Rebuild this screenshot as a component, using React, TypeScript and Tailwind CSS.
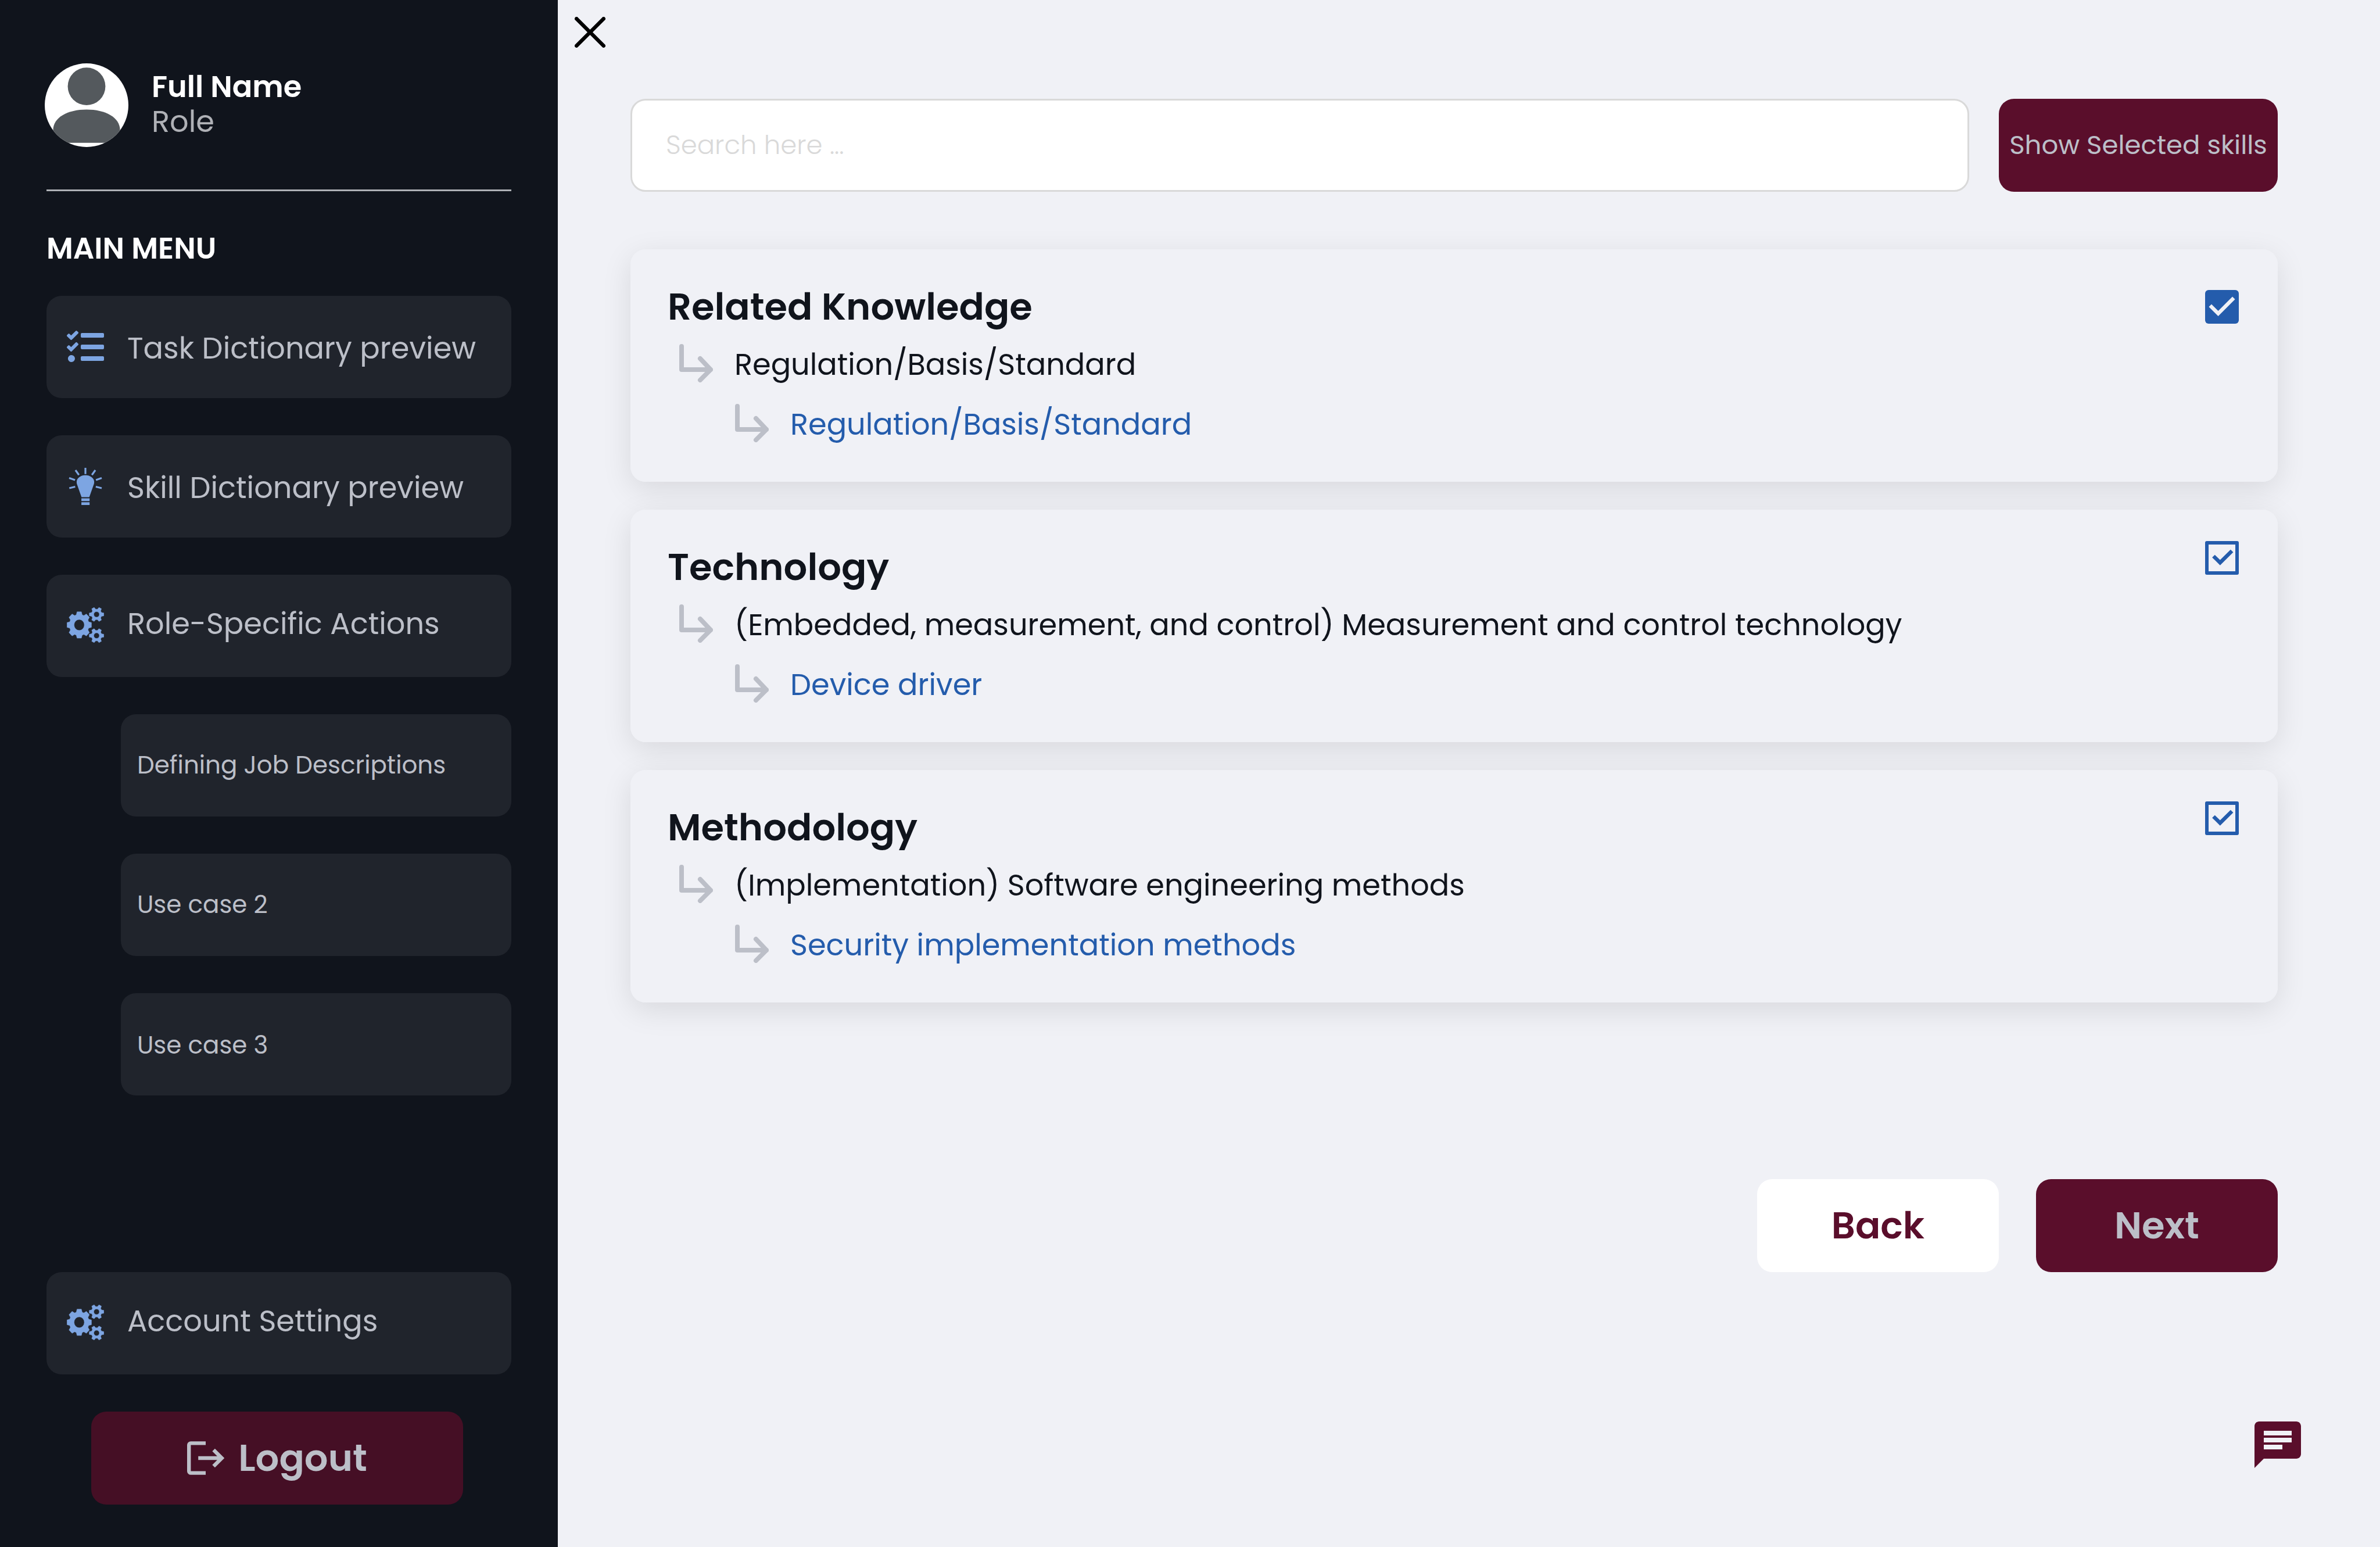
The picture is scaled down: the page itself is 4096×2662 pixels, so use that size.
import { useState } from "react";
import type { ReactNode } from "react";
import { FaTasks } from "react-icons/fa";
import { MdChat } from "react-icons/md";

/** Outline of a toothed wheel; the first tooth points to the right. */
function gearPath(
  cx: number,
  cy: number,
  rx: number,
  ry: number,
  teeth: number,
  body: number,
  tipHalf: number,
  baseHalf: number,
  hole: number,
) {
  const k = ry / rx;
  const points: string[] = [];
  for (let i = 0; i < teeth; i++) {
    const a = (i * 2 * Math.PI) / teeth;
    const corners = [
      [body, -baseHalf],
      [rx, -tipHalf],
      [rx, tipHalf],
      [body, baseHalf],
    ];
    for (const [u, v] of corners) {
      const x = cx + u * Math.cos(a) - v * Math.sin(a);
      const y = cy + (u * Math.sin(a) + v * Math.cos(a)) * k;
      points.push(`${x.toFixed(1)} ${y.toFixed(1)}`);
    }
  }
  const h = hole * k;
  return `M${points.join("L")}ZM${cx - hole} ${cy}a${hole} ${h} 0 1 0 ${hole * 2} 0a${hole} ${h} 0 1 0 ${-hole * 2} 0Z`;
}

const GEARS = [
  gearPath(80, 119, 79, 85, 8, 61, 14, 19, 33),
  gearPath(192, 51, 47, 47, 6, 32, 9, 12, 18),
  gearPath(192, 188, 47, 47, 6, 32, 9, 12, 18),
];

function GearsIcon() {
  return (
    <svg viewBox="0 5 240 240" className="size-16 shrink-0" fill="currentColor" fillRule="evenodd" stroke="currentColor" strokeWidth="2" strokeLinejoin="round" aria-hidden="true">
      {GEARS.map((d) => (
        <path key={d} d={d} />
      ))}
    </svg>
  );
}

function BulbIcon() {
  return (
    <svg viewBox="42 54 240 240" className="size-16 shrink-0" fill="currentColor" aria-hidden="true">
      <path
        d="M162 54V94M98 69L120 100M226 69L204 100M57 120L95 133M267 120L230 133M58 185L96 176M267 185L229 176"
        stroke="currentColor"
        strokeWidth="12"
      />
      <path d="M137 243L107 158C98 125 128 102 162 102S226 125 217 158L187 243Z" />
      <path d="M136 251h53v18h-53zM136 276h53v18h-53z" />
    </svg>
  );
}

function AvatarIcon() {
  return (
    <svg viewBox="0 0 180 180" className="size-36 shrink-0" role="img" aria-label="Profile picture">
      <clipPath id="avatar">
        <circle cx="90" cy="90" r="90" />
      </clipPath>
      <g clipPath="url(#avatar)">
        <path d="M0 0h180v180H0z" fill="#fff" />
        <circle cx="90" cy="49.5" r="40.5" fill="#54595D" />
        <path d="M18 171V144C18 116 50 99.5 90 99.5S162 116 162 144V171Z" fill="#54595D" />
      </g>
    </svg>
  );
}

function CloseIcon() {
  return (
    <svg viewBox="0 0 198 198" className="size-[53px]" stroke="currentColor" strokeWidth="24" strokeLinecap="round" aria-hidden="true">
      <path d="M12 12L186 186M186 12L12 186" />
    </svg>
  );
}

function LogoutIcon() {
  return (
    <svg viewBox="0 0 80 72" className="h-[58px] w-16 shrink-0" fill="none" stroke="currentColor" strokeWidth="8" aria-hidden="true">
      <path d="M40 4H8a4 4 0 0 0-4 4V64a4 4 0 0 0 4 4H40M24 36H74M57 18.5L74.5 36L57 53.5" />
    </svg>
  );
}

function BranchIcon() {
  return (
    <svg viewBox="0 0 58 66" className="mb-1.5 h-[66px] w-[58px] shrink-0 text-[#BCBFC8]" fill="none" stroke="currentColor" strokeWidth="8" strokeLinecap="round" strokeLinejoin="round" aria-hidden="true">
      <path d="M4 4V44H54M36 25L54 44L36 62" />
    </svg>
  );
}

function MenuItem({ icon, label, shift }: { icon: ReactNode; label: string; shift: string }) {
  return (
    <a href="#" className="flex h-44 items-center gap-10 rounded-[26px] bg-[#20242C] pl-[35px] text-[51px] leading-[76px] text-[#BCBFC8]">
      <span className="text-[#7DA5E2]">{icon}</span>
      <span className={shift}>{label}</span>
    </a>
  );
}

function SubItem({ label, shift = "" }: { label: string; shift?: string }) {
  return (
    <a href="#" className="ml-32 flex h-44 items-center rounded-[26px] bg-[#20242C] pl-7 text-[42px] leading-[62px] text-[#BCBFC8]">
      <span className={shift}>{label}</span>
    </a>
  );
}

function Sidebar() {
  return (
    <aside className="flex w-[960px] shrink-0 flex-col bg-[#10141C] px-20 pt-[109px] pb-[73px]">
      <div className="-ml-[3px] flex items-start gap-10">
        <AvatarIcon />
        <div className="pt-[10px] text-[51px] leading-[60px]">
          <p className="font-semibold text-white">Full Name</p>
          <p className="text-[#AFB1B6]">Role</p>
        </div>
      </div>
      <hr className="mt-[73px] border-t-3 border-[#AFB1B6]" />
      <h2 className="mt-[60px] text-[51px] leading-[76px] font-semibold text-white">MAIN MENU</h2>
      <nav className="mt-11 flex flex-col gap-16">
        <MenuItem icon={<FaTasks className="size-16" />} label="Task Dictionary preview" shift="pt-1" />
        <MenuItem icon={<BulbIcon />} label="Skill Dictionary preview" shift="pt-1" />
        <MenuItem icon={<GearsIcon />} label="Role-Specific Actions" shift="pb-2" />
        <SubItem label="Defining Job Descriptions" />
        <SubItem label="Use case 2" />
        <SubItem label="Use case 3" shift="pt-1" />
      </nav>
      <div className="mt-auto flex flex-col gap-16 pt-16">
        <MenuItem icon={<GearsIcon />} label="Account Settings" shift="pb-2" />
        <button type="button" className="ml-[77px] flex h-40 w-[640px] items-center justify-center gap-6 rounded-[26px] bg-[#450F25] text-[64px] leading-[96px] font-semibold text-[#BCBFC8]">
          <LogoutIcon />
          Logout
        </button>
      </div>
    </aside>
  );
}

type Skill = { title: string; group: string; item: string; filled: boolean };

const SKILLS: Skill[] = [
  { title: "Related Knowledge", group: "Regulation/Basis/Standard", item: "Regulation/Basis/Standard", filled: true },
  {
    title: "Technology",
    group: "(Embedded, measurement, and control) Measurement and control technology",
    item: "Device driver",
    filled: false,
  },
  {
    title: "Methodology",
    group: "(Implementation) Software engineering methods",
    item: "Security implementation methods",
    filled: false,
  },
];

function SkillCheckbox({ label, filled }: { label: string; filled: boolean }) {
  const [checked, setChecked] = useState(true);
  return (
    <label className={filled ? "mt-[70px] grid size-[58px]" : "mt-[54px] grid size-[58px]"}>
      <input
        type="checkbox"
        aria-label={label}
        checked={checked}
        onChange={(e) => setChecked(e.target.checked)}
        className={
          filled
            ? "col-start-1 row-start-1 size-full appearance-none rounded-[6px] bg-[#245CAC]"
            : "col-start-1 row-start-1 size-full appearance-none rounded-[3px] border-[6px] border-[#245CAC]"
        }
      />
      {checked && (
        <svg
          viewBox="3 3 18 18"
          className={filled ? "pointer-events-none col-start-1 row-start-1 size-full text-[#F0F1F6]" : "pointer-events-none col-start-1 row-start-1 size-full text-[#245CAC]"}
          fill="currentColor"
          aria-hidden="true"
        >
          <path d={filled ? "M10 17l-5-5 1.41-1.41L10 14.17l7.59-7.59L19 8l-9 9z" : "M6.76 11.75L8.2 10.35L11 13.05L16.6 7.56L18.03 8.96L11 15.93Z"} />
        </svg>
      )}
    </label>
  );
}

function SkillCard({ skill }: { skill: Skill }) {
  return (
    <article className="relative flex items-start justify-between rounded-[26px] bg-[#F0F1F6] pr-[67px] pl-16 before:absolute before:inset-0 before:-z-10 before:rounded-[26px] before:shadow-[0_13px_51px_rgba(0,0,0,0.1)]">
      <div className="pt-[51px] pb-[47px] text-[51px] leading-[103px] text-[#10141C]">
        <h3 className="text-[64px] leading-[96px] font-semibold">{skill.title}</h3>
        <p className="flex items-center gap-[37px] pl-5">
          <BranchIcon />
          {skill.group}
        </p>
        <p className="flex items-center gap-[37px] pl-[116px] text-[#245CAC]">
          <BranchIcon />
          <a href="#">{skill.item}</a>
        </p>
      </div>
      <SkillCheckbox label={skill.title} filled={skill.filled} />
    </article>
  );
}

export default function App() {
  return (
    <div className="flex min-h-screen bg-[#F0F1F6] font-['Poppins','Inter',sans-serif]">
      <Sidebar />
      <main className="flex min-w-0 flex-1 flex-col pt-[29px] pb-32">
        <button type="button" aria-label="Close" className="ml-[29px] self-start text-black">
          <CloseIcon />
        </button>
        <div className="mt-[88px] flex gap-[51px] pr-44 pl-[125px]">
          <input
            type="search"
            aria-label="Search"
            placeholder="Search here ..."
            className="h-40 min-w-0 flex-1 rounded-[26px] border-3 border-[#D9D9D9] bg-white px-[58px] text-[45px] font-light text-[#10141C] placeholder:text-[#D9D9D9]"
          />
          <button type="button" className="h-40 w-[480px] rounded-[26px] bg-[#5A0E2B] text-[45px] leading-[68px] whitespace-nowrap text-[#BCBFC8]">
            Show Selected skills
          </button>
        </div>
        <section className="isolate mt-[99px] flex flex-col gap-12 pr-44 pl-[125px]">
          {SKILLS.map((skill) => (
            <SkillCard key={skill.title} skill={skill} />
          ))}
        </section>
        <div className="mt-[304px] flex justify-end gap-16 pr-44 text-[64px] leading-[96px] font-semibold">
          <button type="button" className="h-40 w-[416px] rounded-[26px] bg-white text-[#5A0E2B]">
            Back
          </button>
          <button type="button" className="h-40 w-[416px] rounded-[26px] bg-[#5A0E2B] text-[#BCBFC8]">
            Next
          </button>
        </div>
        <button type="button" aria-label="Open chat" className="mt-auto mr-32 self-end text-[#5A0E2B]">
          <MdChat className="size-24" />
        </button>
      </main>
    </div>
  );
}
